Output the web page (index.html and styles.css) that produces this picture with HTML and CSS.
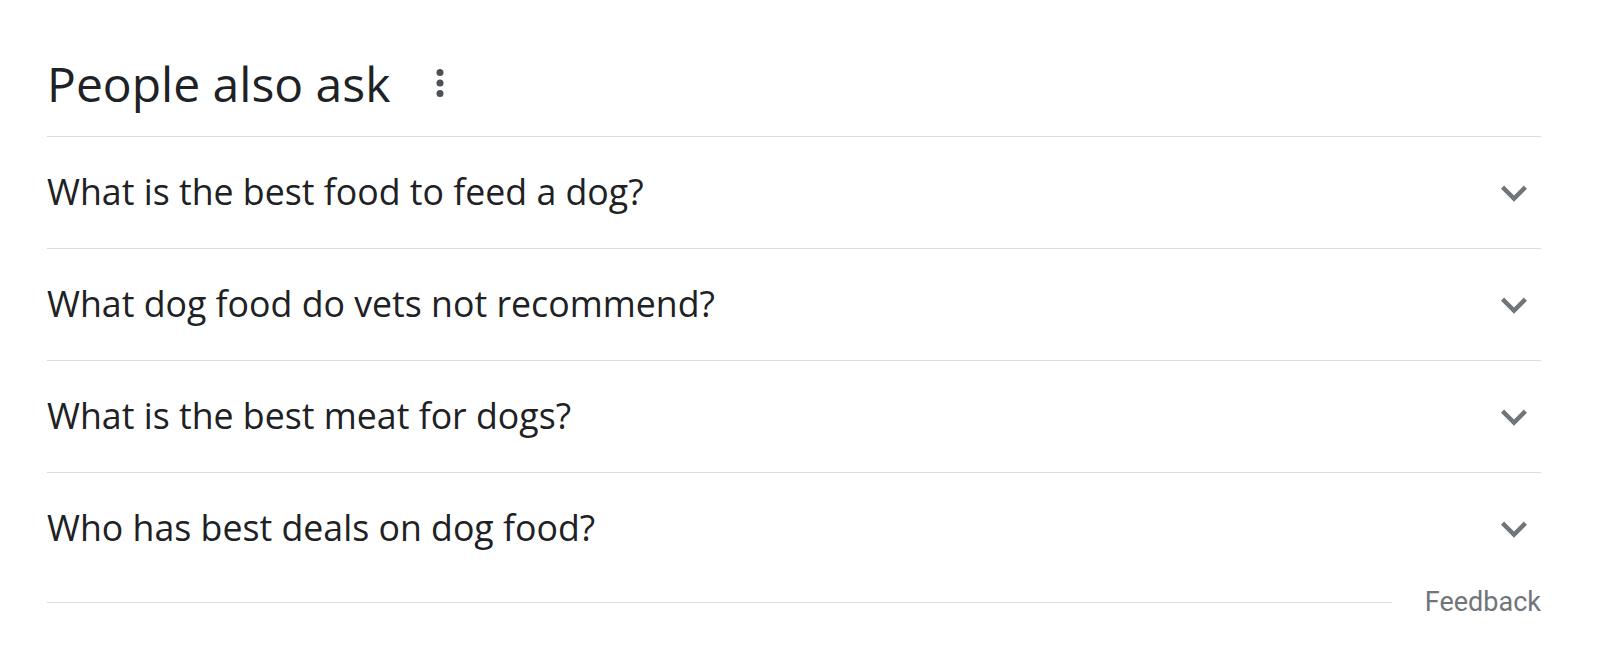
FILE: index.html
```html
<!DOCTYPE html>
<html lang="en">
<head>
<meta charset="utf-8">
<title>People also ask</title>
<link rel="stylesheet" href="styles.css">
</head>
<body>
<div class="paa">
  <div class="paa-head">
    <h2 class="paa-title">People also ask</h2>
    <svg class="more" viewBox="0 0 24 24" aria-hidden="true"><circle cx="12" cy="6" r="2"/><circle cx="12" cy="12" r="2"/><circle cx="12" cy="18" r="2"/></svg>
  </div>
  <div class="q">
    <span class="q-text">What is the best food to feed a dog?</span>
    <svg class="chev" viewBox="0 0 24 24" aria-hidden="true"><path d="M16.59 8.59L12 13.17 7.41 8.59 6 10l6 6 6-6z"/></svg>
  </div>
  <div class="q">
    <span class="q-text">What dog food do vets not recommend?</span>
    <svg class="chev" viewBox="0 0 24 24" aria-hidden="true"><path d="M16.59 8.59L12 13.17 7.41 8.59 6 10l6 6 6-6z"/></svg>
  </div>
  <div class="q">
    <span class="q-text">What is the best meat for dogs?</span>
    <svg class="chev" viewBox="0 0 24 24" aria-hidden="true"><path d="M16.59 8.59L12 13.17 7.41 8.59 6 10l6 6 6-6z"/></svg>
  </div>
  <div class="q last">
    <span class="q-text">Who has best deals on dog food?</span>
    <svg class="chev" viewBox="0 0 24 24" aria-hidden="true"><path d="M16.59 8.59L12 13.17 7.41 8.59 6 10l6 6 6-6z"/></svg>
  </div>
  <div class="foot">
    <div class="foot-line"></div>
    <span class="feedback">Feedback</span>
  </div>
</div>
</body>
</html>
```

FILE: styles.css
```css
html, body {
  margin: 0;
  padding: 0;
  background: #ffffff;
}

.paa {
  padding: 56px 59px 0 47px;
  font-family: "Open Sans", "Liberation Sans", sans-serif;
  color: #202124;
}

.paa-head {
  display: flex;
  align-items: center;
  gap: 29px;
  padding-bottom: 24px;
  border-bottom: 1px solid #dadce0;
}

.paa-title {
  margin: 0;
  font-size: 48px;
  line-height: 56px;
  font-weight: 400;
  color: #202124;
}

.more {
  width: 42px;
  height: 42px;
  fill: #4d5156;
  margin-top: -3px;
}

.q {
  display: flex;
  align-items: center;
  justify-content: space-between;
  height: 111px;
  border-bottom: 1px solid #dadce0;
}

.q.last {
  border-bottom: none;
}

.q-text {
  font-size: 35.7px;
  line-height: 40px;
  margin-top: -4px;
}

.chev {
  width: 52px;
  height: 52px;
  fill: #70757a;
  margin-right: 1px;
}

.foot {
  display: flex;
  align-items: center;
  gap: 33px;
  height: 36px;
}

.foot-line {
  flex: 1;
  border-top: 1px solid #dadce0;
}

.feedback {
  font-family: Roboto, "Liberation Sans", sans-serif;
  font-size: 27px;
  line-height: 36px;
  color: #70757a;
}
```
